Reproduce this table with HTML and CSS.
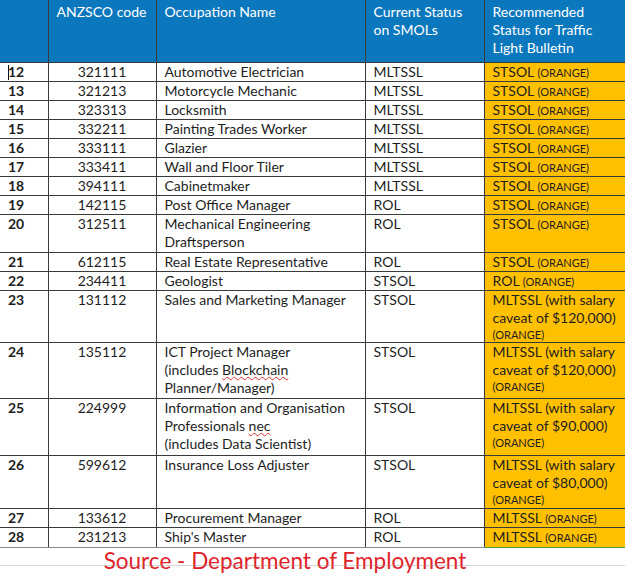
FILE: index.html
```html
<!DOCTYPE html>
<html lang="en">
<head>
<meta charset="utf-8">
<title>Traffic Light Bulletin</title>
<link rel="stylesheet" href="styles.css">
</head>
<body>
<table class="sheet">
  <colgroup>
    <col class="c-num">
    <col class="c-code">
    <col class="c-name">
    <col class="c-cur">
    <col class="c-rec">
  </colgroup>
  <thead>
    <tr class="head">
      <th></th>
      <th>ANZSCO code</th>
      <th>Occupation Name</th>
      <th>Current Status<br>on SMOLs</th>
      <th>Recommended<br>Status for Traffic<br>Light Bulletin</th>
    </tr>
  </thead>
  <tbody>
    <tr><td class="num"><span class="caret"></span>12</td><td class="code">321111</td><td>Automotive Electrician</td><td>MLTSSL</td><td class="rec">STSOL <span class="tag">(ORANGE)</span></td></tr>
    <tr><td class="num">13</td><td class="code">321213</td><td>Motorcycle Mechanic</td><td>MLTSSL</td><td class="rec">STSOL <span class="tag">(ORANGE)</span></td></tr>
    <tr><td class="num">14</td><td class="code">323313</td><td>Locksmith</td><td>MLTSSL</td><td class="rec">STSOL <span class="tag">(ORANGE)</span></td></tr>
    <tr><td class="num">15</td><td class="code">332211</td><td>Painting Trades Worker</td><td>MLTSSL</td><td class="rec">STSOL <span class="tag">(ORANGE)</span></td></tr>
    <tr><td class="num">16</td><td class="code">333111</td><td>Glazier</td><td>MLTSSL</td><td class="rec">STSOL <span class="tag">(ORANGE)</span></td></tr>
    <tr><td class="num">17</td><td class="code">333411</td><td>Wall and Floor Tiler</td><td>MLTSSL</td><td class="rec">STSOL <span class="tag">(ORANGE)</span></td></tr>
    <tr><td class="num">18</td><td class="code">394111</td><td>Cabinetmaker</td><td>MLTSSL</td><td class="rec">STSOL <span class="tag">(ORANGE)</span></td></tr>
    <tr><td class="num">19</td><td class="code">142115</td><td>Post Office Manager</td><td>ROL</td><td class="rec">STSOL <span class="tag">(ORANGE)</span></td></tr>
    <tr class="pad1"><td class="num">20</td><td class="code">312511</td><td>Mechanical Engineering<br>Draftsperson</td><td>ROL</td><td class="rec">STSOL <span class="tag">(ORANGE)</span></td></tr>
    <tr><td class="num">21</td><td class="code">612115</td><td>Real Estate Representative</td><td>ROL</td><td class="rec">STSOL <span class="tag">(ORANGE)</span></td></tr>
    <tr><td class="num">22</td><td class="code">234411</td><td>Geologist</td><td>STSOL</td><td class="rec">ROL <span class="tag">(ORANGE)</span></td></tr>
    <tr><td class="num">23</td><td class="code">131112</td><td>Sales and Marketing Manager</td><td>STSOL</td><td class="rec">MLTSSL (with salary<br>caveat of $120,000)<span class="tag block">(ORANGE)</span></td></tr>
    <tr class="pad1"><td class="num">24</td><td class="code">135112</td><td>ICT Project Manager<br>(includes <span class="spell">Blockchain</span><br>Planner/Manager)</td><td>STSOL</td><td class="rec">MLTSSL (with salary<br>caveat of $120,000)<span class="tag block">(ORANGE)</span></td></tr>
    <tr class="pad2"><td class="num">25</td><td class="code">224999</td><td>Information and Organisation<br>Professionals <span class="spell">nec</span><br>(includes Data Scientist)</td><td>STSOL</td><td class="rec">MLTSSL (with salary<br>caveat of $90,000)<span class="tag block">(ORANGE)</span></td></tr>
    <tr class="pad1"><td class="num">26</td><td class="code">599612</td><td>Insurance Loss Adjuster</td><td>STSOL</td><td class="rec">MLTSSL (with salary<br>caveat of $80,000)<span class="tag block">(ORANGE)</span></td></tr>
    <tr><td class="num">27</td><td class="code">133612</td><td>Procurement Manager</td><td>ROL</td><td class="rec">MLTSSL <span class="tag">(ORANGE)</span></td></tr>
    <tr class="last pad1"><td class="num">28</td><td class="code">231213</td><td>Ship's Master</td><td>ROL</td><td class="rec">MLTSSL <span class="tag">(ORANGE)</span></td></tr>
  </tbody>
</table>
<div class="source">Source - Department of Employment</div>
</body>
</html>
```
FILE: styles.css
```css
html, body {
  margin: 0;
  padding: 0;
  background: #ffffff;
}
body {
  width: 625px;
  height: 577px;
  overflow: hidden;
  font-family: Lato, "Open Sans", sans-serif;
  color: #1e1e1e;
}
.sheet {
  border-collapse: collapse;
  table-layout: fixed;
  width: 626px;
  font-size: 14px;
  line-height: 18px;
}
.c-num { width: 48px; }
.c-code { width: 108px; }
.c-name { width: 209px; }
.c-cur { width: 119px; }
.c-rec { width: 142px; }
.sheet th, .sheet td {
  border: 1px solid #3a3a3a;
  padding: 0 4px 0 8px;
  text-align: left;
  vertical-align: top;
  white-space: nowrap;
}
.sheet tr > :first-child { border-left: none; }
.sheet tr > :last-child { border-right: none; }
.head th {
  background: #0b78bd;
  color: #ffffff;
  font-weight: normal;
  height: 58px;
  padding-top: 3px;
  padding-bottom: 1px;
  border-top: none;
}
.pad1 td { padding-bottom: 1px; }
.pad2 td { padding-bottom: 2px; }
.num {
  font-weight: bold;
  position: relative;
}
.caret {
  position: absolute;
  left: 8px;
  top: 2px;
  width: 1px;
  height: 15px;
  background: #111;
}
.code { text-align: center !important; padding: 0 !important; }
.rec { background: #ffc000; }
.tag { font-size: 11px; line-height: 11px; }
.tag.block { display: block; line-height: 15px; }
.spell {
  text-decoration: underline wavy #e03030;
  text-decoration-thickness: 1px;
  text-underline-offset: 1px;
}
.last td { border-bottom-color: #888; }
.last .rec { border-bottom-color: #4f9a3c; }
.source {
  position: relative;
  text-align: center;
  font-size: 22.5px;
  line-height: 26px;
  color: #e02229;
  width: 570px;
}
.source::after {
  content: "";
  position: absolute;
  left: 0;
  right: -55px;
  top: 17px;
  height: 1px;
  background: rgba(150,150,150,0.4);
}
```
